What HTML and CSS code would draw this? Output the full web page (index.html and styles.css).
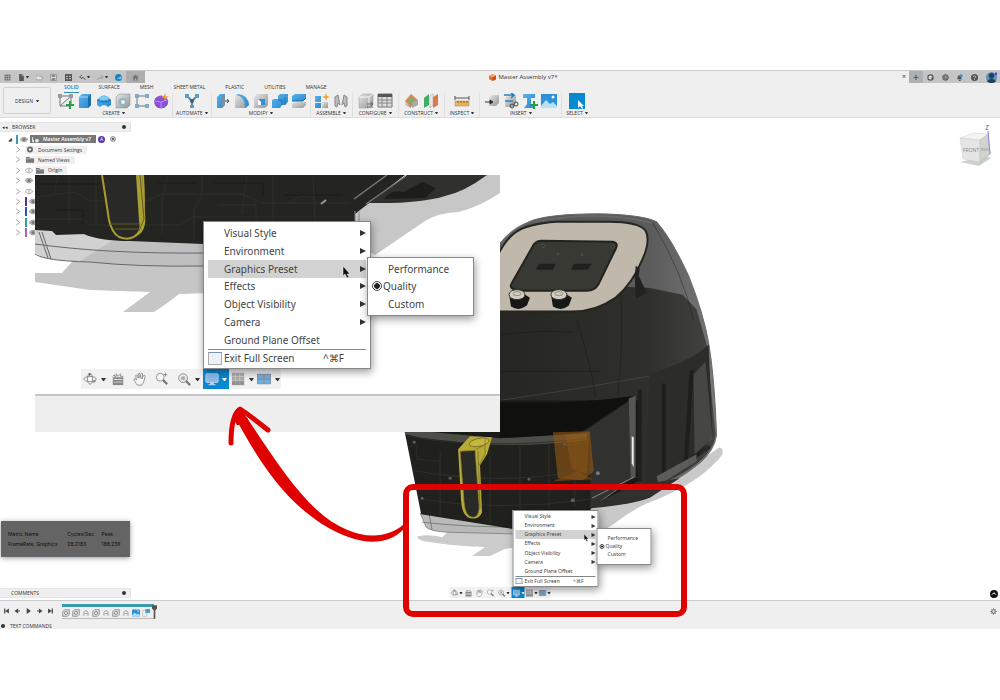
FILE: index.html
```html
<!DOCTYPE html>
<html lang="en">
<head>
<meta charset="utf-8">
<title>Master Assembly v7*</title>
<link rel="stylesheet" href="styles.css">
</head>
<body>
<svg class="defs" aria-hidden="true">
  <defs>
    <linearGradient id="blue" x1="0" y1="0" x2="1" y2="1"><stop offset="0" stop-color="#58b3ee"/><stop offset="1" stop-color="#2b87cc"/></linearGradient>
    <linearGradient id="steel" x1="0" y1="0" x2="1" y2="1"><stop offset="0" stop-color="#e6e6e6"/><stop offset="1" stop-color="#959595"/></linearGradient>
    <linearGradient id="shell" x1="0" y1="0" x2="1" y2="0"><stop offset="0" stop-color="#555553"/><stop offset=".75" stop-color="#5c5c5c"/><stop offset="1" stop-color="#777"/></linearGradient>
    <linearGradient id="body" x1="0" y1="0" x2="1" y2="0"><stop offset="0" stop-color="#252522"/><stop offset=".7" stop-color="#2f2f2b"/><stop offset="1" stop-color="#444441"/></linearGradient>
  </defs>
  <symbol id="i-orbit" viewBox="0 0 16 16"><g fill="none" stroke="#888"><ellipse cx="8" cy="8" rx="7" ry="3"/><ellipse cx="8" cy="8" rx="3" ry="6"/></g><path d="M6 1l4 1-3 3zM12 9l3 1-3 3z" fill="#777"/><circle cx="8" cy="8" r="1.500" fill="#fff"/></symbol>
  <symbol id="i-look" viewBox="0 0 16 16"><path d="M2 6h12v9H2z" fill="#888"/><path d="M3 8h10v1H3zM3 11h10v1H3z" fill="#ddd"/><path d="M2 5l2-2v2h2V2l2 3 3-3v3h3" fill="none" stroke="#888"/></symbol>
  <symbol id="i-hand" viewBox="0 0 16 16"><path d="M5 15C3 12 1 10 1 8q1-1 3 1L3 4q1-1 2 0l1 3V2q1-1 2 0v5l1-5q1-1 2 0l-1 6 2-4q2-1 2 1l-2 7-2 3z" fill="#f4f4f4" stroke="#888"/></symbol>
  <symbol id="i-zoom" viewBox="0 0 16 16"><circle cx="6" cy="6" r="4.500" fill="#f5f5f5" stroke="#888"/><path d="M9 9l5 5" stroke="#777" stroke-width="2.500"/><path d="M12 1v4M10 3h4" stroke="#888"/></symbol>
  <symbol id="i-fit" viewBox="0 0 16 16"><circle cx="7" cy="7" r="5" fill="#e8e8e8" stroke="#888"/><path d="M5 5h4v4H5z" fill="#aaa"/><path d="M10 10l5 5" stroke="#777" stroke-width="2.500"/></symbol>
  <symbol id="i-display" viewBox="0 0 16 16"><rect x="1" y="2" width="14" height="10" rx="1" fill="#8bb9e8" stroke="#b9d2ea"/><path d="M6 12h4v2H6z" fill="#cfdce8"/><path d="M4 14.500h8" stroke="#dbe8f5"/></symbol>
  <symbol id="i-grid" viewBox="0 0 16 16"><path d="M1 1h14v14H1z" fill="#aaa"/><path d="M1 5h14M1 10h14M5 1v14M10 1v14" stroke="#d0d0d0"/><path d="M1 10h14v5H1z" fill="#777" opacity=".5"/></symbol>
  <symbol id="i-views" viewBox="0 0 16 16"><path d="M0 2h16v12H0z" fill="#8796a5"/><path d="M1 3h6v4H1zM9 3h6v4H9zM1 9h6v4H1zM9 9h6v4H9z" fill="#6cb0e5"/></symbol>
  <symbol id="i-eye" viewBox="0 0 10 8"><path d="M0 4q5-6 10 0-5 6-10 0" fill="#bbb" stroke="#999"/><circle cx="5" cy="4" r="2" fill="#777"/></symbol>
  <symbol id="i-eyeoff" viewBox="0 0 10 8"><path d="M0 4q5-6 10 0-5 6-10 0M5 1v6" fill="#eee" stroke="#aaa"/></symbol>
  <symbol id="i-folder" viewBox="0 0 10 8"><path d="M0 1h4l1 1h5v6H0z" fill="#777"/><path d="M0 3h10" stroke="#bbb"/></symbol>
  <symbol id="i-chev" viewBox="0 0 6 8"><path d="M1 1l4 3-4 3" fill="none" stroke="#999"/></symbol>
  <symbol id="i-feature" viewBox="0 0 12 12"><path d="M1 4l3-3h7v7l-3 3H1z" fill="#ddd" stroke="#777"/><circle cx="6" cy="6" r="2.500" fill="none" stroke="#777"/></symbol>
  <symbol id="i-joint" viewBox="0 0 12 12"><path d="M3 10V5l3-3 3 3v5M5 7h3" fill="none" stroke="#999" stroke-width="1.500"/></symbol>
  <symbol id="i-picture" viewBox="0 0 16 16"><path d="M0 1h16v14H0z" fill="#2d91d5"/><path d="M0 13l5-6 4 4 3-2 4 4v2H0z" fill="#b8e0f7"/><circle cx="12" cy="4" r="1.500" fill="#e4f5ff"/></symbol>
  <symbol id="i-box" viewBox="0 0 16 16"><path d="M1 4l4-3h10v11l-4 3H1z" fill="url(#steel)" stroke="#999" stroke-width=".5"/><path d="M1 4h10v11M11 4l4-3" fill="none" stroke="#f5f5f5"/></symbol>
</svg>

<main class="app">
  <header class="titlebar">
    <div class="quick">
      <button aria-label="Data panel"><svg viewBox="0 0 12 12"><path d="M1 1h10v10H1z" fill="#666"/><path d="M1 4h10M1 8h10M4 1v10M8 1v10" stroke="#c4c4c4"/></svg></button>
      <button class="wide" aria-label="File"><svg viewBox="0 0 12 12"><path d="M2 0h5l3 3v9H2z" fill="#555"/><path d="M7 0v3h3" stroke="#ccc" fill="none"/></svg><i class="caret"></i></button>
      <button aria-label="Open"><svg viewBox="0 0 12 12"><path d="M0 10V3h4l1 1h5v2h2l-2 4z" fill="#e5e5e5" stroke="#888"/></svg></button>
      <button aria-label="Save"><svg viewBox="0 0 12 12"><path d="M1 1h10v10H1z" fill="#ddd" stroke="#777"/><path d="M3 1h6v4H3zM3 7h6v4H3z" fill="#888"/></svg></button>
      <button aria-label="Extensions"><svg viewBox="0 0 12 12"><path d="M0 0h12v12H0z" fill="#555"/><path d="M2 3h3v2H2zM7 3h3v2H7zM2 7h3v2H2zM7 7h3v2H7z" fill="#bbb"/></svg></button>
      <button class="wide" aria-label="Undo"><svg viewBox="0 0 12 12"><path d="M5 2L1 5l4 3V6q4-1 6 4" fill="none" stroke="#555" stroke-width="1.500"/></svg><i class="caret"></i></button>
      <button class="wide" aria-label="Redo"><svg viewBox="0 0 12 12"><path d="M7 2l4 3-4 3V6Q3 5 1 10" fill="none" stroke="#999" stroke-width="1.500"/></svg><i class="caret"></i></button>
      <button aria-label="Sync"><svg viewBox="0 0 12 12"><circle cx="6" cy="6" r="6" fill="#1386c8"/><path d="M3 8h8V4z" fill="#8ed5f5"/></svg></button>
      <button class="home" aria-label="Home"><svg viewBox="0 0 12 12"><path d="M0 6l6-5 6 5H10v5H2V6z" fill="#777"/><path d="M5 8h2v3H5z" fill="#bbb"/></svg></button>
    </div>
    <div class="doc-tab">
      <h1><svg viewBox="0 0 12 12"><path d="M0 3l6-3 6 3v6l-6 3-6-3z" fill="#e8702c"/><path d="M0 3l6 3 6-3-6-3z" fill="#f6a36d"/><path d="M6 6v6l6-3V3z" fill="#c84e12"/></svg>Master Assembly v7*</h1>
      <button aria-label="Close document">×</button>
    </div>
    <div class="account">
      <button class="plus" aria-label="New tab">+</button>
      <button aria-label="Extensions"><svg viewBox="0 0 12 12"><circle cx="6" cy="6" r="4.500" fill="#ddd" stroke="#555" stroke-width="2"/><path d="M6 6h4v4z" fill="#555"/></svg></button>
      <button aria-label="Job status"><svg viewBox="0 0 12 12"><circle cx="6" cy="6" r="5" fill="#777" stroke="#555"/><path d="M6 3v3h3" stroke="#bbb" fill="none"/></svg></button>
      <button aria-label="Notifications"><svg viewBox="0 0 12 12"><path d="M1 9l2-2V4q3-4 6 0v3l2 2zM5 10h3v2H5z" fill="#555"/><circle cx="9" cy="3" r="2.500" fill="#2b98df"/></svg></button>
      <button aria-label="Help"><svg viewBox="0 0 12 12"><circle cx="6" cy="6" r="6" fill="#555"/><path d="M4 5q0-2 2-2t2 2q0 1-2 2M6 8v2" stroke="#eee" fill="none"/></svg></button>
      <button class="avatar" aria-label="Profile"><svg viewBox="0 0 12 12"><circle cx="6" cy="6" r="6" fill="#5b94bd"/><circle cx="6" cy="4" r="3" fill="#243f59"/><path d="M1 10q5-6 10 0-5 4-10 0" fill="#243f59"/><circle cx="11" cy="2" r="1.500" fill="#5534d8"/></svg></button>
    </div>
  </header>

  <section class="ribbon">
    <button class="workspace-switch">DESIGN <i class="caret"></i></button>
    <div class="ribbon-main">
      <nav class="tabs">
        <a class="is-active" href="#solid">SOLID</a><a href="#surface">SURFACE</a><a href="#mesh">MESH</a><a href="#sheet">SHEET METAL</a><a href="#plastic">PLASTIC</a><a href="#utilities">UTILITIES</a><a href="#manage">MANAGE</a>
      </nav>
      <div class="groups">
        <div class="group">
          <div class="tools">
            <svg viewBox="0 0 16 16"><path d="M2 3h11v10H2zM2 13L13 3" fill="none" stroke="#777"/><path d="M0 1h4v4H0zM11 1h4v4h-4z" fill="#999"/><path d="M12 8v8M8 12h8" stroke="#21a04a" stroke-width="2"/></svg>
            <svg viewBox="0 0 16 16"><path d="M2 4l3-3h9v11l-3 3H2z" fill="url(#blue)"/><path d="M11 4l3-3v11l-3 3z" fill="#1e6ca8"/><path d="M2 4h9" stroke="#9fd6f8"/></svg>
            <svg viewBox="0 0 16 16"><path d="M1 7q7-9 14 0v5l-3 2q-4-4-8 0l-3-2z" fill="url(#blue)"/><ellipse cx="8" cy="5" rx="5" ry="2" fill="#83caf3"/><path d="M1 7q7 4 14 0" fill="none" stroke="#1e6ca8"/></svg>
            <svg viewBox="0 0 16 16"><path d="M1 4l3-3h11v11l-3 3H1z" fill="url(#steel)" stroke="#888" stroke-width=".5"/><circle cx="7.500" cy="9" r="4" fill="#92b4ca"/><circle cx="8" cy="9" r="2" fill="#eee"/></svg>
            <svg viewBox="0 0 16 16"><path d="M3 3h10M3 3v10h10" fill="none" stroke="#777"/><path d="M1 1h4v4H1zM11 1h4v4h-4zM1 11h4v4H1zM11 11h4v4h-4z" fill="#82aac4"/></svg>
            <svg viewBox="0 0 16 16"><path d="M3 5q5-4 10 0 3 3 1 7-2 3-6 3-5 0-6-4-1-4 1-6" fill="#8a50d6" stroke="#8a50d6"/><path d="M2 8l6 1 6-2M8 9v6" stroke="#ba91ef" fill="none"/><path d="M12 0l1 3 3 1-3 1-1 3-1-3-3-1 3-1z" fill="#f4a325"/></svg>
          </div>
          <button>CREATE <i class="caret"></i></button>
        </div>
        <div class="group">
          <div class="tools"><svg viewBox="0 0 16 16"><path d="M3 3l5 5 5-5M8 8v6" stroke="#4a8fbb" stroke-width="2" fill="none"/><path d="M1 1h4v4H1zM11 1h4v4h-4zM6 12h4v3H6z" fill="#629dbf"/><circle cx="8" cy="8" r="2" fill="#555"/></svg></div>
          <button>AUTOMATE <i class="caret"></i></button>
        </div>
        <div class="group">
          <div class="tools">
            <svg viewBox="0 0 16 16"><path d="M2 4l3-3h5v11l-3 3H2z" fill="url(#blue)"/><path d="M7 4l3-3v11l-3 3z" fill="#7b8f9d"/><path d="M10 8h4M12 6l2 2-2 2" fill="none" stroke="#444"/></svg>
            <svg viewBox="0 0 16 16"><path d="M1 15V2h3q10 0 11 10l-3 3z" fill="url(#steel)"/><path d="M2 2q9 1 9 13l4-3Q14 2 4 1z" fill="url(#blue)"/></svg>
            <svg viewBox="0 0 16 16"><path d="M1 4l3-3h11v11l-3 3H1z" fill="url(#steel)"/><path d="M5 6h7v6H5z" fill="#2f92d5"/><path d="M5 6l3 3v3H5z" fill="#fff"/></svg>
            <svg viewBox="0 0 16 16"><path d="M6 3l2-2h8v8l-3 3h-3l-2 3H0V7l2-1h4z" fill="url(#blue)"/><path d="M6 7h4v5M13 4v8" fill="none" stroke="#1c6eab"/></svg>
            <svg viewBox="0 0 16 16"><path d="M1 3l3-2h11v4l-3 3H1z" fill="url(#blue)"/><path d="M1 10l3-1h11v3l-3 3H1z" fill="url(#steel)"/><path d="M1 8h11l3-3" stroke="#1c6eab" fill="none"/></svg>
          </div>
          <button>MODIFY <i class="caret"></i></button>
        </div>
        <div class="group">
          <div class="tools">
            <svg viewBox="0 0 16 16"><path d="M1 3h6v6H1zM1 10h6v5H1z" fill="url(#blue)"/><path d="M8 9h6v6H8z" fill="url(#steel)"/><path d="M12 0l1 3 3 1-3 1-1 3-1-3-3-1 3-1z" fill="#f4a325"/></svg>
            <svg viewBox="0 0 16 16"><path d="M2 13V4l3-2 2 10-2-2-1 4zM14 13V4l-3-2-2 10 2-2 1 4z" fill="#bbb" stroke="#888"/></svg>
          </div>
          <button>ASSEMBLE <i class="caret"></i></button>
        </div>
        <div class="group group--roomy">
          <div class="tools">
            <svg viewBox="0 0 16 16"><use href="#i-box"/><path d="M9 11h6M13 9l2 2-2 2M15 14H9" stroke="#666" fill="none"/></svg>
            <svg viewBox="0 0 16 16"><path d="M1 1h14v13H1z" fill="#ddd" stroke="#777"/><path d="M1 1h14v3H1z" fill="#555"/><path d="M1 7h14M1 10h14M5 4v10M10 4v10" stroke="#888"/></svg>
          </div>
          <button>CONFIGURE <i class="caret"></i></button>
        </div>
        <div class="group group--roomy">
          <div class="tools">
            <svg viewBox="0 0 16 16"><path d="M1 7l6 2v6l-6-3z" fill="url(#steel)"/><path d="M7 1l7 6-7 7-6-6z" fill="#e2864c"/><path d="M8 9l6-2v5l-6 3z" fill="#aaa"/><path d="M4 7l4-3 3 3-4 4z" fill="#78ad79"/></svg>
            <svg viewBox="0 0 16 16"><path d="M1 5l5-4v11l-5 3z" fill="#43ad67"/><path d="M7 3l3-2v11l-3 3z" fill="#eee" stroke="#999" stroke-width=".5"/><path d="M10 4l5-3v11l-5 3z" fill="#df7849"/></svg>
          </div>
          <button>CONSTRUCT <i class="caret"></i></button>
        </div>
        <div class="group group--roomy">
          <div class="tools"><svg viewBox="0 0 16 16"><path d="M1 3v4M15 3v4M1 5h14" stroke="#555"/><path d="M1 8h14v5H1z" fill="#e9b25c" stroke="#c38634" stroke-width=".5"/><path d="M4 8v2M7 8v2M10 8v2M13 8v2" stroke="#865f2c"/></svg></div>
          <button>INSPECT <i class="caret"></i></button>
        </div>
        <div class="group group--mid">
          <div class="tools">
            <svg viewBox="0 0 16 16"><path d="M5 5l3-3h7v8l-3 3H5z" fill="url(#steel)"/><path d="M1 9h7M6 7l3 2-3 2z" fill="#333" stroke="#333"/></svg>
            <svg viewBox="0 0 16 16"><path d="M2 5l3-3h8v8l-3 4H2z" fill="url(#steel)"/><path d="M1 2h9M8 0l3 2-3 3M2 8h8" fill="none" stroke="#2382c4" stroke-width="1.500"/><circle cx="9" cy="13" r="2" fill="none" stroke="#444"/><circle cx="13" cy="11" r="2" fill="none" stroke="#444"/></svg>
            <svg viewBox="0 0 16 16"><path d="M1 1h12v4H9v6l3 4H2l3-4V5H1z" fill="url(#blue)"/><path d="M12 8v8M8 12h8" stroke="#21a04a" stroke-width="2"/></svg>
            <svg viewBox="0 0 16 16"><use href="#i-picture"/></svg>
          </div>
          <button>INSERT <i class="caret"></i></button>
        </div>
        <div class="group group--mid group--last">
          <div class="tools"><svg viewBox="0 0 16 16"><path d="M0 0h16v16H0z" fill="#0788d2"/><path d="M9 7v8l2-2 2 3 1-1-1-2h2z" fill="#fff"/></svg></div>
          <button>SELECT <i class="caret"></i></button>
        </div>
      </div>
    </div>
  </section>

  <section class="workspace">
    <svg class="model" viewBox="0 118 1000 483" aria-label="Air fryer assembly">
      <path d="M720 448q8 4-4 15-18 20-58 37-19 6-43 24l-25 16v-38l70-13z" fill="#c9c9c9"/>
      <path d="M418 537q12-2 24 1l20-18 55 14v14l-12 2-15 7h-18l13-9q-35-1-62-6-8-3-5-5z" fill="#cbcbcb"/>
      <path d="M420 514l6 14q4 4 20 5l75 2v-19z" fill="#b9b9b9" stroke="#666" stroke-width=".6"/>
      <path d="M422 523q42 5 98 5M429 515l3 16" fill="none" stroke="#555" stroke-width=".6"/>
      <path d="M490 258q14-26 39-36 18-8 71-8 43 1 57 8 15 17 32 54 15 38 20 67 6 34 8 93-2 15-17 28-24 19-46 28-32 8-63 16l-101-30-30-120z" fill="url(#shell)" stroke="#696969"/>
      <path d="M500 246q12-19 32-24 70-12 120 1" fill="none" stroke="#77777a" stroke-width="2" opacity=".5"/>
      <path d="M490 310l43 2q50 3 75-12 10-9 13-13l28 1 34 7 14 15 10 35 9 91q-2 15-17 27-20 16-48 25-29 7-60 10l-101-70z" fill="url(#body)"/>
      <path d="M707 350q-15 16-54 26-65 12-153 25" fill="none" stroke="#777" stroke-width=".7" opacity=".4"/>
      <path d="M653 223q30 50 41 98M621 288q3 50-3 108M577 320q14 45 19 78M500 335q50-5 72-2M495 372h105" fill="none" stroke="#111" stroke-width=".6" opacity=".6"/>
      <path d="M650 375q45-15 59-30l4 92-19 27q-22 15-49 22z" fill="#2c2c29"/>
      <path d="M640 390v92M664 384v99M692 371l-6 96M650 490l60-43" stroke="#121211" stroke-width="4" opacity=".5"/>
      <path d="M694 375l12-13 7 77-18 16z" fill="#777" opacity=".35"/>
      <path d="M657 477l40-22v7l-38 24z" fill="#5c5c5b"/>
      <path d="M400 401h238v81l-48 28-150-30z" fill="#191917"/>
      <path d="M500 403q78 2 136-7l-56 37q-40 7-80 5z" fill="#10100f"/>
      <path d="M580 435l50-34 4 77-44 31z" fill="#31312f"/>
      <path d="M629 399l7-3v82l-5 2z" fill="#565653"/><path d="M632 437l2 1v30l-2-4z" fill="#ededed"/>
      <path d="M404 430q25 11 65 12 55 1 121-9l1 98h-71l-99-16-9-45z" fill="#20201d"/>
      <path d="M404 430l51 5 45 4 87-5v7q-78 9-134 1-28-2-48-7z" fill="#4e4e49"/>
      <path d="M408 437q75 14 181 2M413 471q83 17 177-1M420 500q80 13 170 0M440 452v65M490 447v76M520 446v66M549 445v65M575 442v65" fill="none" stroke="#2e2e2a"/>
      <path d="M408 448l8-2 1 14 23 2v13l50 4" fill="none" stroke="#2b2b27"/>
      <path d="M553 433l37-1 4 40-11 9-25-2z" fill="#8f5614" opacity=".64"/><path d="M565 435l25-2-3 42-15-5z" fill="#b06a12" opacity=".25"/>
      <path d="M553 482l25-10 15 8" fill="#865018" opacity=".6"/>
      <g fill="#5d5d59"><circle cx="414" cy="443" r="1.500"/><circle cx="450" cy="479" r="1.500"/><circle cx="529" cy="480" r="1.500"/><circle cx="565" cy="445" r="1.500"/><circle cx="573" cy="501" r="2"/><circle cx="422" cy="499" r="1.500"/><circle cx="598" cy="474" r="2" fill="#777b80"/></g>
      <path d="M458 450l12-13 22 1-5 17-7 11 2 47q-3 8-12 6-8-2-9-18z" fill="#b7aa36"/>
      <path d="M460 452l15-1 4 54q1 14-7 13-7-1-8-15z" fill="#292927" stroke="#8d8428" stroke-width=".7"/>
      <ellipse cx="479" cy="443" rx="10" ry="4" fill="#c5b73e" stroke="#6e671e" stroke-width=".8" transform="rotate(-12 479 443)"/>
      <path d="M476 450l8-4M478 452l2 58M485 439v16l-6 11" fill="none" stroke="#756c22" stroke-width=".7"/>
      <path d="M592 499l42-21M592 508l33-23" stroke="#999" stroke-width=".8"/>
      <path d="M591 509q45-4 60-11l29-19-47 8-43 19z" fill="#30302d"/>
      <path d="M488 279q12-35 27-46 12-9 42-11h52q30 0 37 9 5 10-3 28-10 25-27 39-20 14-43 14h-85z" fill="#bfb8ab" stroke="#252522" stroke-width="2"/>
      <path d="M541 241l72 1q6 1 3 7l-17 35q-4 7-12 7h-63q-17 0-12-8l20-35q3-7 9-7z" fill="#393934" stroke="#22221f" stroke-width="2"/>
      <path d="M539 264h17l-3 6h-17zM574 264h18l-4 6h-17z" fill="#20201e"/>
      <g fill="#222" stroke="#77776d" stroke-width=".5"><circle cx="558" cy="254" r="1"/><circle cx="582" cy="255" r="1"/><circle cx="543" cy="246" r="1.500"/><circle cx="613" cy="247" r="1.500"/></g>
      <path d="M509 294l2 13q8 5 16-1l3-8-8-5zM551 294l2 13q9 5 16-1l3-8-8-5z" fill="#171715"/>
      <ellipse cx="517" cy="295" rx="8" ry="5" fill="#d0ccc0" stroke="#35352f"/><ellipse cx="559" cy="295" rx="8" ry="5" fill="#d0ccc0" stroke="#35352f"/>
      <ellipse cx="517" cy="294" rx="4" ry="2" fill="none" stroke="#77776d" stroke-width=".7"/><ellipse cx="559" cy="294" rx="4" ry="2" fill="none" stroke="#77776d" stroke-width=".7"/>
      <path d="M636 266l4 3-1 7 8 17-11 6-1-22z" fill="#222220"/>
    </svg>

    <div class="left-dock">
      <section class="browser">
        <h2 class="dock-head"><span>◂◂</span>BROWSER<i class="dot"></i></h2>
        <ul class="tree">
          <li class="root"><span class="expand">◢</span><i class="bar teal"></i><svg viewBox="0 0 10 8"><use href="#i-eye"/></svg><span class="chip selected"><svg viewBox="0 0 10 8"><path d="M2 1v6h2M6 4h3v3H6z" fill="#eee" stroke="#eee"/></svg>Master Assembly v7</span><i class="badge">A</i><input type="radio" checked aria-label="Activate component"></li>
          <li><svg class="chev"><use href="#i-chev"/></svg><span class="chip"><svg viewBox="0 0 10 10"><circle cx="5" cy="5" r="3" fill="none" stroke="#666" stroke-width="2.500"/></svg>Document Settings</span></li>
          <li><svg class="chev"><use href="#i-chev"/></svg><span class="chip"><svg><use href="#i-folder"/></svg>Named Views</span></li>
          <li><svg class="chev"><use href="#i-chev"/></svg><svg><use href="#i-eyeoff"/></svg><span class="chip"><svg><use href="#i-folder"/></svg>Origin</span></li>
          <li><svg class="chev"><use href="#i-chev"/></svg><svg><use href="#i-eye"/></svg></li>
          <li><svg class="chev"><use href="#i-chev"/></svg><svg><use href="#i-eyeoff"/></svg></li>
          <li><svg class="chev"><use href="#i-chev"/></svg><i class="bar purple"></i><svg><use href="#i-eye"/></svg></li>
          <li><svg class="chev"><use href="#i-chev"/></svg><i class="bar navy"></i><svg><use href="#i-eye"/></svg></li>
          <li><svg class="chev"><use href="#i-chev"/></svg><i class="bar sea"></i><svg><use href="#i-eye"/></svg></li>
          <li><svg class="chev"><use href="#i-chev"/></svg><i class="bar mauve"></i><svg><use href="#i-eye"/></svg></li>
        </ul>
      </section>
      <table class="metrics">
        <tr><th>Metric Name</th><th>Cycles/Sec</th><th>Peak</th></tr>
        <tr><td>FrameRate: Graphics</td><td>28.2183</td><td>188.239</td></tr>
      </table>
      <h2 class="dock-head comments">COMMENTS<i class="dot"></i></h2>
    </div>

    <svg class="viewcube" viewBox="0 0 40 46" aria-label="View cube">
      <path d="M4 38l19 4 12-8-6-2z" fill="#cfcfcf"/><path d="M4 14l14-5 14 1-8 6z" fill="#f5f5f5" stroke="#ccc" stroke-width=".5"/><path d="M4 14l20 2v22L7 35z" fill="#e5e5e5" stroke="#ccc" stroke-width=".5"/><path d="M24 16l8-6 2 20-10 8z" fill="#d2d2d2" stroke="#bbb" stroke-width=".5"/>
      <path d="M32 7l2 23" stroke="#8b7ddb"/><path d="M34 30l-11 10" stroke="#9bdc9b"/><text x="29" y="6" class="axis">Z</text><text x="7" y="28" class="face">FRONT</text><text x="25" y="27" class="side">RIGHT</text>
    </svg>

    <div class="navigator">
      <div class="navbar">
        <button aria-label="Orbit"><svg><use href="#i-orbit"/></svg><i class="caret"></i></button>
        <button aria-label="Look at"><svg><use href="#i-look"/></svg></button>
        <button aria-label="Pan"><svg><use href="#i-hand"/></svg></button>
        <button aria-label="Zoom"><svg><use href="#i-zoom"/></svg></button>
        <button aria-label="Fit"><svg><use href="#i-fit"/></svg><i class="caret"></i></button>
        <button class="is-active" aria-label="Display settings"><svg><use href="#i-display"/></svg><i class="caret"></i></button>
        <button aria-label="Grid and snaps"><svg><use href="#i-grid"/></svg><i class="caret"></i></button>
        <button aria-label="Viewports"><svg><use href="#i-views"/></svg><i class="caret"></i></button>
      </div>
      <div class="menu">
        <div class="menu-items">
          <button>Visual Style<i class="more"></i></button>
          <button>Environment<i class="more"></i></button>
          <button class="is-open">Graphics Preset<i class="more"></i></button>
          <button>Effects<i class="more"></i></button>
          <button>Object Visibility<i class="more"></i></button>
          <button>Camera<i class="more"></i></button>
          <button>Ground Plane Offset</button>
        </div>
        <button class="exit"><i class="window"></i><span>Exit Full Screen</span><kbd>^⌘F</kbd></button>
        <div class="submenu">
          <label><input type="radio" name="preset">Performance</label>
          <label><input type="radio" name="preset" checked>Quality</label>
          <label><input type="radio" name="preset">Custom</label>
        </div>
        <svg class="pointer" viewBox="0 0 8 12"><path d="M1 0v10l2-2 2 4 2-1-2-3h3z" fill="#111" stroke="#fff" stroke-width=".5"/></svg>
      </div>
    </div>
    <button class="help" aria-label="Assistant"><svg viewBox="0 0 12 12"><circle cx="6" cy="6" r="6" fill="#111"/><path d="M3 7q3-5 6 0" stroke="#fff" fill="none" stroke-width="1.500"/></svg></button>

    <figure class="inset">
      <svg class="inset-model" viewBox="35 175 465 257" aria-label="Enlarged bottom of the assembly">
        <path d="M345 240v-36l30-10 125-24v23q-23 15-42 19-21 1-33 9l-50 34z" fill="#c7c7c7"/>
        <path d="M35 273h27l18-20 130 10v30l-31 1q-14 11-25 18h-31l27-20-60-2-55-8z" fill="#c6c6c6"/>
        <path d="M35 225l173 12v29q-91 1-163-8l-10-6z" fill="#bfbfbf"/>
        <path d="M35 229l80 10-35 22-35-3-10-5z" fill="#d1d1d1"/>
        <path d="M35 244q72 10 170 9M35 254q10 7 55 8 46 5 115 4M39 232l9 26M42 232l9 27" fill="none" stroke="#686868"/>
        <path d="M35 175h370l-50 39v30H203l-73-3q-31 0-46-7l-28 1-4-4-17-1z" fill="#242421"/>
        <path d="M35 197l40-5 14 9h57l16-7h80l20 9h88M35 219h48l7 6h90l12-8h160M69 175v50M96 178v48M168 175l-6 24v35M202 175v20l-8 14v30M247 175l-5 39M273 176v47M313 176l2 46M58 176l-4 18M218 205h38v17M288 203q21-15 29 1" fill="none" stroke="#2e2e2a"/>
        <path d="M35 184h65M56 210h27v14M158 183h38M285 195h57M214 183h49v14" fill="none" stroke="#1b1b18"/>
        <path d="M355 212l52-37h80q-23 17-42 21-25 8-76 7z" fill="#30302d"/>
        <path d="M354 199l33-24M366 204l40-28" stroke="#777" stroke-width="1.500"/>
        <path d="M384 199q7-10 20-7l18-10 14 6-11 10z" fill="#1d1d1b"/><path d="M321 204l5-4" stroke="#999" stroke-width="2"/>
        <path d="M102 175q4 25 7 45 3 13 10 17 13 5 20-5 7-10 4-57" fill="#292928" stroke="#a79d2e" stroke-width="2"/>
        <path d="M136 175l3 46q3 15-12 17 21 0 18-25l-3-38z" fill="#a99f32"/><path d="M140 175l4 44-5 12M110 224h29M115 229h24" fill="none" stroke="#635d20"/>
        <path d="M355 211v13M359 212v14" stroke="#888"/>
      </svg>
      <div class="inset-footer"></div>
      <div class="navigator navigator--large">
        <div class="navbar">
          <button aria-label="Orbit"><svg><use href="#i-orbit"/></svg><i class="caret"></i></button>
          <button aria-label="Look at"><svg><use href="#i-look"/></svg></button>
          <button aria-label="Pan"><svg><use href="#i-hand"/></svg></button>
          <button aria-label="Zoom"><svg><use href="#i-zoom"/></svg></button>
          <button aria-label="Fit"><svg><use href="#i-fit"/></svg><i class="caret"></i></button>
          <button class="is-active" aria-label="Display settings"><svg><use href="#i-display"/></svg><i class="caret"></i></button>
          <button aria-label="Grid and snaps"><svg><use href="#i-grid"/></svg><i class="caret"></i></button>
          <button aria-label="Viewports"><svg><use href="#i-views"/></svg><i class="caret"></i></button>
        </div>
        <div class="menu">
          <div class="menu-items">
            <button>Visual Style<i class="more"></i></button>
            <button>Environment<i class="more"></i></button>
            <button class="is-open">Graphics Preset<i class="more"></i></button>
            <button>Effects<i class="more"></i></button>
            <button>Object Visibility<i class="more"></i></button>
            <button>Camera<i class="more"></i></button>
            <button>Ground Plane Offset</button>
          </div>
          <button class="exit"><i class="window"></i><span>Exit Full Screen</span><kbd>^⌘F</kbd></button>
          <div class="submenu">
            <label><input type="radio" name="preset-large">Performance</label>
            <label><input type="radio" name="preset-large" checked>Quality</label>
            <label><input type="radio" name="preset-large">Custom</label>
          </div>
          <svg class="pointer" viewBox="0 0 8 12"><path d="M1 0v10l2-2 2 4 2-1-2-3h3z" fill="#111" stroke="#fff" stroke-width=".5"/></svg>
        </div>
      </div>
    </figure>
  </section>

  <footer class="timeline">
    <div class="transport">
      <button aria-label="First"><svg viewBox="0 0 10 10"><path d="M1 1h2v8H1zM9 1v8L3 5z"/></svg></button>
      <button aria-label="Back"><svg viewBox="0 0 10 10"><path d="M6 1v8L0 5zM6 4h3v2H6z"/></svg></button>
      <button aria-label="Play"><svg viewBox="0 0 10 10"><path d="M2 0v10l7-5z"/></svg></button>
      <button aria-label="Forward"><svg viewBox="0 0 10 10"><path d="M4 1v8l6-4zM1 4h3v2H1z"/></svg></button>
      <button aria-label="Last"><svg viewBox="0 0 10 10"><path d="M7 1h2v8H7zM1 1v8l6-4z"/></svg></button>
    </div>
    <div class="track">
      <svg><use href="#i-feature"/></svg><svg><use href="#i-feature"/></svg><svg><use href="#i-joint"/></svg><svg><use href="#i-feature"/></svg><svg><use href="#i-joint"/></svg><svg><use href="#i-feature"/></svg><svg><use href="#i-joint"/></svg><svg><use href="#i-picture"/></svg><svg viewBox="0 0 12 12"><path d="M1 2h6v9H1z" fill="#eee" stroke="#bbb"/><path d="M5 0h7v6H5z" fill="#4a9fd2"/></svg>
      <svg class="marker" viewBox="0 0 6 16"><path d="M0 0h6v4L4 6v10H2V6L0 4z" fill="#555"/></svg>
    </div>
    <button class="settings" aria-label="Timeline settings"><svg viewBox="0 0 12 12"><circle cx="6" cy="6" r="3" fill="none" stroke="#666" stroke-width="2"/><path d="M6 0v12M0 6h12M2 2l8 8M10 2l-8 8" stroke="#666"/><circle cx="6" cy="6" r="2" fill="#eee"/></svg></button>
  </footer>
  <div class="text-commands"><i class="dot"></i>TEXT COMMANDS</div>

  <svg class="annotation" viewBox="0 70 1000 559" aria-hidden="true">
    <rect x="406" y="487" width="278" height="127" rx="7" fill="none" stroke="#df0000" stroke-width="6"/>
    <path d="M404 524C384 542 350 540 317 510 293 488 273 457 247 418L236 419C261 465 285 500 322 524 354 544 384 549 404 529z" fill="#df0000"/>
    <path d="M231 443Q231 415 240 409Q252 417 268 430" fill="none" stroke="#df0000" stroke-width="5" stroke-linecap="round" stroke-linejoin="round"/>
    <path d="M234 420q1-10 6-11l8 10-3 6h-8z" fill="#df0000"/>
  </svg>
</main>
</body>
</html>
```
FILE: styles.css
```css
* { box-sizing: border-box; }
body { margin: 0; padding: 70px 0 71px; background: #fff; color: #333; font-family: "Open Sans", "Noto Sans", sans-serif; font-size: 5px; line-height: 8px; }
button { padding: 0; border: 0; background: none; color: inherit; font: inherit; display: flex; align-items: center; justify-content: center; }
h1, h2, ul, figure { margin: 0; padding: 0; font: inherit; list-style: none; }
svg { display: block; }
.defs { position: absolute; width: 0; height: 0; }
.caret { display: inline-block; flex: none; border: 1px solid transparent; border-top: 2px solid currentColor; border-bottom: 0; width: 3px; margin-left: 1px; vertical-align: middle; }
.dot { width: 4px; height: 4px; border-radius: 50%; background: #333; }

.app { position: relative; display: flex; flex-direction: column; min-height: calc(100vh - 141px); }

.titlebar { display: flex; height: 13px; background: #efefef; border-top: 1px solid #c9c9c9; }
.quick, .account { display: flex; background: #c5c5c5; }
.quick { width: 145px; }
.quick button { flex: 1 1 14px; }
.quick .wide { flex-basis: 18px; }
.quick svg { width: 7px; height: 7px; }
.quick .home { flex: 0 0 19px; background: #adadad; }
.doc-tab { flex: 1; display: flex; align-items: center; padding-right: 3px; }
.doc-tab h1 { flex: 1; display: flex; align-items: center; justify-content: center; gap: 2px; font-size: 6px; }
.doc-tab h1 svg { width: 7px; height: 7px; }
.doc-tab button { font-size: 7px; }
.account { width: 91px; }
.account button { flex: 1; }
.account svg { width: 7px; height: 7px; }
.account .plus { flex: 0 0 14px; background: #b0b0b0; font-size: 11px; }
.account .avatar { flex: 0 0 18px; }
.account .avatar svg { width: 11px; height: 11px; }

.ribbon { display: flex; gap: 4px; padding-left: 3px; height: 35px; background: #efefef; border-bottom: 1px solid #ddd; }
.workspace-switch { width: 48px; height: 27px; margin-top: 4px; border: 1px solid #d2d2d2; border-radius: 2px; gap: 2px; }
.ribbon-main { display: flex; flex-direction: column; }
.tabs { display: flex; gap: 20px; padding-left: 9px; height: 9px; }
.tabs a { color: #333; text-decoration: none; }
.tabs .is-active { color: #1779bd; font-weight: 600; box-shadow: 0 1px #2b8bc8; }
.groups { display: flex; padding-top: 1px; }
.group { display: flex; flex-direction: column; align-items: center; padding: 0 3px; border-right: 1px solid #e0e0e0; }
.group--roomy { padding: 0 5px; }
.group--mid { padding: 0 4px; }
.group--last { border: 0; }
.tools { display: flex; gap: 3px; }
.tools svg { width: 16px; height: 16px; }
.group button { white-space: nowrap; gap: 1px; }

.workspace { position: relative; flex: 1; display: flex; border-bottom: 1px solid #ccc; }
.model { position: absolute; inset: 0; width: 100%; height: 100%; }
.left-dock { position: relative; display: flex; flex-direction: column; width: 131px; padding: 4px 0 2px; }
.dock-head { display: flex; align-items: center; gap: 4px; height: 10px; padding: 0 4px 0 2px; background: #efefef; border: 1px solid #e5e5e5; border-left: 0; }
.dock-head .dot { margin-left: auto; }
.comments { padding-left: 11px; }
.tree { display: grid; grid-auto-rows: 1fr; height: 104px; margin-top: 2px; }
.tree li { display: flex; align-items: center; gap: 2px; padding-left: 15px; }
.tree .root { padding-left: 8px; }
.tree svg { width: 8px; height: 7px; flex: none; }
.tree .chev { width: 6px; margin-right: 2px; }
.expand { width: 6px; font-size: 5px; }
.chip { display: flex; align-items: center; gap: 4px; height: 8px; padding: 0 5px 0 1px; background: #efefef; }
.chip.selected { background: #777; color: #fff; font-weight: 600; }
.bar { width: 2px; height: 9px; }
.teal { background: #3e9cab; }
.purple { background: #54309e; }
.navy { background: #2953ad; }
.sea { background: #2aa09a; }
.mauve { background: #a06bba; }
.badge { width: 7px; height: 7px; border-radius: 50%; background: #5a35a9; color: #fff; font-style: normal; text-align: center; line-height: 7px; }
.root input { appearance: none; width: 6px; height: 6px; margin: 0 0 0 3px; border: 1px solid #aaa; border-radius: 50%; background: #333; box-shadow: inset 0 0 0 1px #eee; }
.metrics { margin: auto 0 31px 1px; width: 129px; height: 36px; padding: 8px 5px; border-collapse: separate; border-spacing: 0; background: #646464; color: #111; box-shadow: 0 1px 5px #999; font-family: Inter, sans-serif; }
.metrics th, .metrics td { padding: 0 2px; text-align: left; font-weight: 400; white-space: nowrap; }
.viewcube { position: absolute; top: 6px; right: 4px; width: 40px; height: 46px; }
.axis { font-size: 7px; fill: #6554cc; }
.face { font-size: 5px; fill: #888; }
.side { font-size: 3px; fill: #888; }
.help { position: absolute; right: 2px; bottom: 2px; }
.help svg { width: 8px; height: 8px; }

.navigator {
  --cols: 13px 11px 11px 11px 16px 13px 13px 13px;
  --bar: 11px; --icon: 8px; --font: 5px;
  --menu-left: 63px; --menu-width: 86px; --items: 64px; --indent: 9px; --side: 2px; --exit: 9px;
  --sub-left: 83px; --sub-top: 17px; --sub-width: 55px; --sub-height: 37px; --sub-pad: 5px; --radio: 5px; --blank: 8px;
  --arrow: 2px; --pointer: 5px; --pointer-left: 70px; --pointer-top: 23px; --inset: 1px; --key: 12px;
  position: absolute; left: 50%; bottom: 2px; transform: translateX(-50%);
}
.navigator--large {
  --cols: 26px 22px 22px 22px 30px 26px 26px 26px;
  --bar: 20px; --icon: 14px; --font: 10px;
  --menu-left: 122px; --menu-width: 168px; --items: 125px; --indent: 16px; --side: 4px; --exit: 17px;
  --sub-left: 163px; --sub-top: 35px; --sub-width: 107px; --sub-height: 59px; --sub-pad: 2px; --radio: 10px; --blank: 16px;
  --arrow: 3px; --pointer: 8px; --pointer-left: 138px; --pointer-top: 44px; --inset: 2px; --key: 22px;
  left: 46px; bottom: 43px; transform: none;
}
.navbar { display: grid; grid-template-columns: var(--cols); height: var(--bar); background: #f1f1f1; }
.navbar svg { width: var(--icon); height: var(--icon); flex: none; }
.navbar .is-active { background: #0788d2; color: #fff; }
.navigator--large .caret { border-width: 3px 2px 0; width: 5px; margin-left: 4px; }
.navigator--large .is-active .caret { margin-left: 3px; }
.menu { position: absolute; left: var(--menu-left); bottom: 100%; width: var(--menu-width); padding: var(--inset) 0; background: #fff; border: 1px solid #888; box-shadow: 1px 3px 8px #0006; color: #444; font-family: "Noto Sans", sans-serif; font-size: var(--font); line-height: 1; }
.menu-items { display: grid; grid-auto-rows: 1fr; height: var(--items); margin: 0 var(--side); }
.menu-items button { justify-content: space-between; padding-left: var(--indent); white-space: nowrap; }
.menu-items .is-open { background: #d2d2d2; }
.more { border: var(--arrow) solid transparent; border-left: calc(var(--arrow) * 2) solid #333; border-right: 0; }
.exit { width: calc(100% - var(--side) * 2); height: var(--exit); margin: 0 var(--side); border-top: 1px solid #888; justify-content: flex-start; white-space: nowrap; }
.window { width: calc(var(--indent) - 2px); height: calc(var(--indent) - 3px); margin-right: 2px; border: 1px solid #aaa; border-top-color: #7794b2; background: #eef2f5; }
.exit kbd { margin-left: auto; margin-right: var(--key); font: inherit; }
.submenu { position: absolute; left: var(--sub-left); top: var(--sub-top); width: var(--sub-width); height: var(--sub-height); padding: var(--sub-pad) var(--side); display: grid; grid-auto-rows: 1fr; background: #fff; border: 1px solid #888; box-shadow: 1px 3px 8px #0006; }
.submenu label { display: flex; align-items: center; }
.submenu input { appearance: none; flex: none; width: var(--blank); height: var(--radio); margin: 0; }
.submenu input:checked { width: var(--radio); margin-right: 1px; border: 1px solid #444; border-radius: 50%; background: radial-gradient(#222 45%, #fff 55%); }
.pointer { position: absolute; left: var(--pointer-left); top: var(--pointer-top); width: var(--pointer); }

.inset { position: absolute; left: 35px; top: 57px; width: 465px; height: 257px; background: #fff; }
.inset-model { width: 100%; height: 100%; }
.inset-footer { position: absolute; inset: auto 0 0; height: 38px; background: #eee; border-top: 2px solid #c6c6c6; }

.timeline { display: flex; height: 21px; background: #efefef; }
.transport { display: flex; gap: 4px; padding-left: 3px; width: 62px; height: 20px; }
.transport svg { width: 7px; height: 6px; fill: #444; }
.track { position: relative; display: flex; align-items: center; gap: 2px; height: 15px; margin-top: 3px; padding-right: 4px; border-top: 3px solid #3c98ad; border-bottom: 1px solid #bbb; }
.track svg { width: 8px; height: 8px; }
.track .marker { position: absolute; right: -3px; top: -2px; width: 5px; height: 14px; }
.settings { margin-left: auto; padding-right: 3px; }
.settings svg { width: 7px; height: 7px; }
.text-commands { display: flex; align-items: center; gap: 5px; height: 7px; padding-left: 1px; background: #efefef; }
.annotation { position: absolute; inset: 0; width: 100%; height: 100%; pointer-events: none; }
```
